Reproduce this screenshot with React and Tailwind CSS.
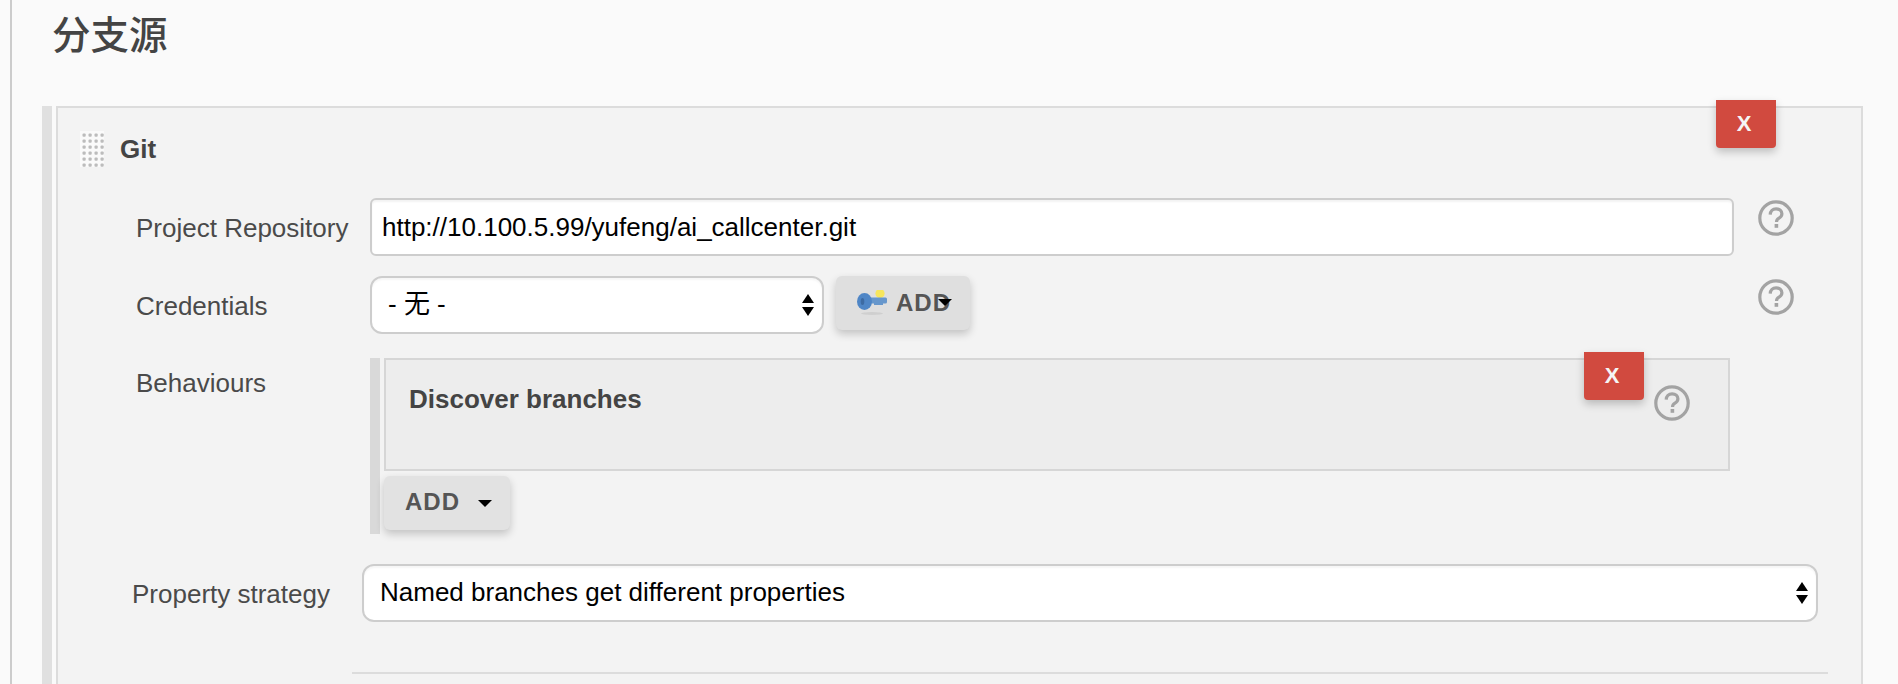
const FONT = 'font-["Liberation_Sans","Noto_Sans_CJK_SC",sans-serif]';

function Help({ className = "" }) {
  return (
    <svg viewBox="0 0 36 36" className={`w-[36px] h-[36px] shrink-0 ${className}`} fill="none">
      <circle cx="18" cy="18" r="16.2" stroke="#a3a3a3" strokeWidth="3.200" />
      <path d="M12.200 14.600c.1-3.600 2.600-5.800 5.900-5.800 3.400 0 5.800 2.100 5.800 5 0 2.100-1 3.300-2.900 4.400-1.900 1.100-2.500 2-2.500 3.900" stroke="#a3a3a3" strokeWidth="3.200" />
      <rect x="16.600" y="24" width="3.600" height="3.800" fill="#a3a3a3" />
    </svg>
  );
}

function Grip() {
  const dots = [];
  for (let r = 0; r < 6; r++) {
    for (let c = 0; c < 4; c++) {
      dots.push(<rect key={`${r}-${c}`} x={2.5 + c * 6} y={2.5 + r * 6} width="3.200" height="3.200" rx="1" fill="#bcbcbc" />);
    }
  }
  return (
    <svg viewBox="0 0 24 36" className="w-[24px] h-[36px] shrink-0">
      <rect width="24" height="36" fill="#fafafa" />
      {dots}
    </svg>
  );
}

function KeyIcon() {
  return (
    <svg viewBox="0 0 30 26" className="w-[30px] h-[26px] shrink-0">
      <ellipse cx="15" cy="23.500" rx="11" ry="1.500" fill="#cfcfcf" />
      <circle cx="23" cy="3.500" r="4.600" fill="#f7e65c" />
      <rect x="9" y="7.500" width="21" height="6" rx="1.500" fill="#6797cc" />
      <rect x="17" y="12.500" width="9" height="2.500" fill="#6797cc" />
      <ellipse cx="7.500" cy="11.500" rx="7.500" ry="8.500" fill="#4f86c6" />
      <ellipse cx="5.500" cy="11.500" rx="1.800" ry="3.500" fill="#3d6ba3" />
    </svg>
  );
}

function SelectArrows() {
  return (
    <svg viewBox="0 0 12 24" className="absolute right-[10px] top-1/2 -translate-y-1/2 w-[12px] h-[24px] pointer-events-none">
      <path d="M6 1 12 10H0z" fill="#000" />
      <path d="M6 23 12 14H0z" fill="#000" />
    </svg>
  );
}

function XButton({ className }) {
  return (
    <button className={`absolute w-[60px] h-[48px] bg-[#d14a3f] text-[#f5f5f5] rounded-b-[4px] font-bold text-[22px] leading-none shadow-[0_4px_8px_rgba(0,0,0,0.22)] pr-[4px] ${className}`}>
      X
    </button>
  );
}

function Caret({ className = "" }) {
  return <span className={`w-0 h-0 border-x-[7px] border-x-transparent border-t-[7px] border-t-black ${className}`} />;
}

function SelectBox({ value, widthClass, extra = "" }) {
  return (
    <div className={`relative h-[58px] shrink-0 ${widthClass} ${extra}`}>
      <select
        defaultValue={value}
        className={`${FONT} appearance-none w-full h-full bg-white border-2 border-[#cdcdcd] rounded-[12px] pl-[16px] pb-[2px] text-[26px] text-black outline-none shadow-[inset_0_2px_2px_rgba(0,0,0,0.04)]`}
      >
        <option>{value}</option>
      </select>
      <SelectArrows />
    </div>
  );
}

export default function App() {
  return (
    <div className={`${FONT} h-[684px] w-full overflow-hidden bg-[#fafafa] pl-[10px]`}>
      <div className="h-full border-l-2 border-[#cccccc]">
        <h1 className="h-[106px] pl-[40px] pt-[11px] text-[38.500px] leading-[50px] font-medium text-[#444444]">分支源</h1>

        <div className="flex pl-[30px] h-[578px]">
          <div className="w-[10px] bg-[#e0e0e0] shrink-0" />
          <div className="relative ml-[4px] w-[1807px] shrink-0 bg-[#f3f3f3] border-2 border-b-0 border-[#dcdcdc]">
            <XButton className="left-[1658px] top-[-8px]" />

            <div className="flex items-center gap-[16px] pl-[22px] h-[90px] pb-[8px]">
              <Grip />
              <span className="text-[26px] font-bold text-[#444444]">Git</span>
            </div>

            <div className="flex pl-[78px] h-[78px]">
              <div className="w-[234px] pt-[13px] text-[26px] leading-[34px] text-[#4a4a4a] shrink-0">Project Repository</div>
              <input
                readOnly
                value="http://10.100.5.99/yufeng/ai_callcenter.git"
                className="w-[1364px] h-[58px] shrink-0 bg-white border-2 border-[#cdcdcd] rounded-[6px] px-[10px] text-[26px] text-black outline-none shadow-[inset_0_2px_2px_rgba(0,0,0,0.05)]"
              />
              <Help className="ml-[24px] mt-[2px]" />
            </div>

            <div className="flex pl-[78px] h-[82px]">
              <div className="w-[234px] pt-[13px] text-[26px] leading-[34px] text-[#4a4a4a] shrink-0">Credentials</div>
              <div className="w-[1364px] shrink-0 flex items-start">
                <SelectBox value="- 无 -" widthClass="w-[454px]" />
                <button className="relative ml-[12px] w-[134px] h-[54px] bg-[#dfdfdf] rounded-[6px] shadow-[0_4px_8px_rgba(0,0,0,0.2)] flex items-center pl-[21px] gap-[9px] text-[24px] font-bold tracking-[1px] text-[#555555]">
                  <KeyIcon />
                  <span>ADD</span>
                  <Caret className="absolute left-[102px] top-[23px]" />
                </button>
              </div>
              <Help className="ml-[24px] mt-[3px]" />
            </div>

            <div className="flex pl-[78px] h-[206px]">
              <div className="w-[234px] pt-[8px] text-[26px] leading-[34px] text-[#4a4a4a] shrink-0">Behaviours</div>
              <div className="w-[1364px] shrink-0 flex h-[176px]">
                <div className="w-[10px] bg-[#d9d9d9] shrink-0" />
                <div className="ml-[4px] flex-1 flex flex-col">
                  <div className="relative w-[1346px] h-[113px] bg-[#ededed] border-2 border-[#d6d6d6] pl-[23px] pt-[22px] text-[26px] leading-[34px] font-bold text-[#444444]">
                    Discover branches
                    <XButton className="left-[1198px] top-[-8px]" />
                    <Help className="absolute left-[1268px] top-[25px]" />
                  </div>
                  <button className="mt-[5px] w-[126px] h-[54px] bg-[#e2e2e2] rounded-[6px] shadow-[0_4px_8px_rgba(0,0,0,0.2)] flex items-center pl-[21px] pb-[3px] text-[24px] font-bold tracking-[1px] text-[#555555]">
                    <span>ADD</span>
                    <Caret className="ml-[18px] mt-[4px]" />
                  </button>
                </div>
              </div>
            </div>

            <div className="flex pl-[74px] h-[108px]">
              <div className="w-[230px] pt-[13px] text-[26px] leading-[34px] text-[#4a4a4a] shrink-0">Property strategy</div>
              <SelectBox value="Named branches get different properties" widthClass="w-[1456px]" />
            </div>

            <div className="ml-[294px] w-[1476px] h-[2px] bg-[#dcdcdc]" />
          </div>
        </div>
      </div>
    </div>
  );
}
